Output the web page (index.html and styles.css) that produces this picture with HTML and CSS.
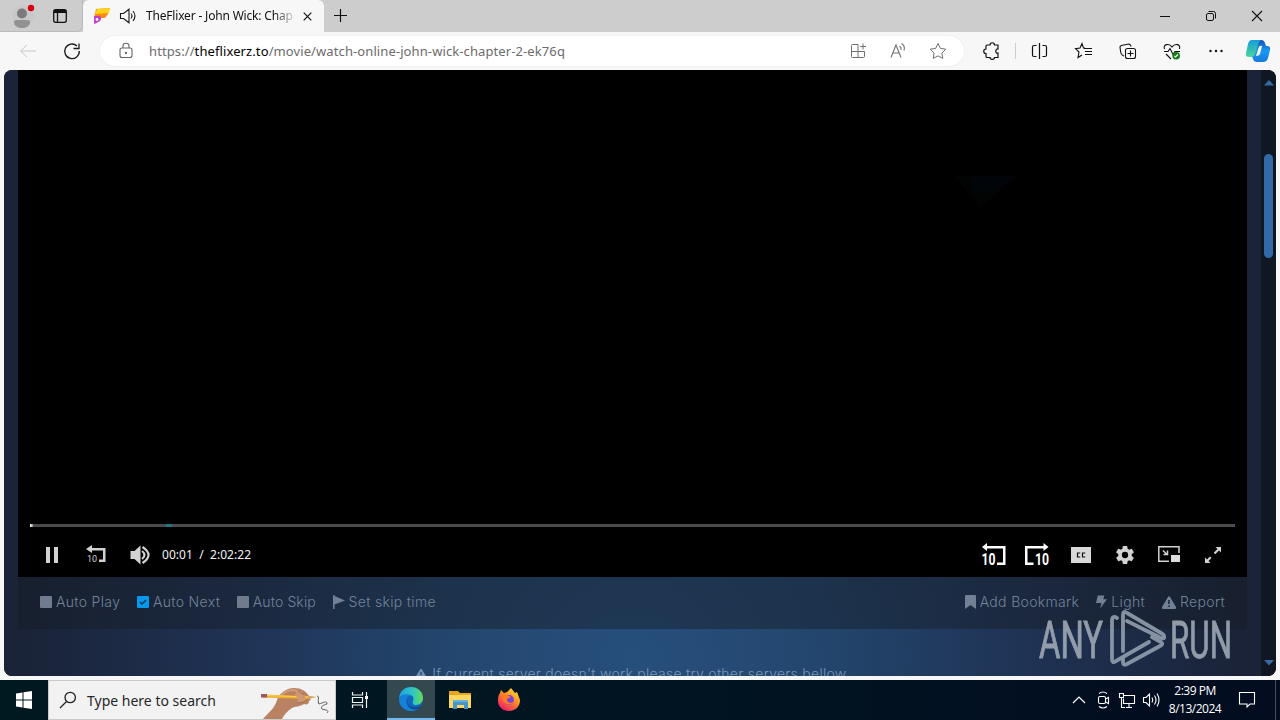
FILE: index.html
```html
<!DOCTYPE html>
<html lang="en">
<head>
<meta charset="utf-8">
<title>TheFlixer - John Wick: Chapter 2</title>
<link rel="stylesheet" href="styles.css">
</head>
<body>
<div class="screen">
  <header class="tabs">
    <div class="tab-tools">
      <svg class="profile" width="30" height="28" viewBox="0 0 30 28"><circle cx="15" cy="14" r="11" fill="#c8c8c8"/><circle cx="14" cy="11.500" r="5" fill="#7b7b7b"/><path d="M6 20q0-2 3-2h10q3 0 3 2c0 4-4 6-8 6s-8-2-8-6" fill="#929292"/><circle cx="23" cy="6" r="3.200" fill="#d8000f"/></svg>
      <svg class="workspaces" width="16" height="16" viewBox="0 0 16 16"><rect x="1.700" y="1.700" width="12.600" height="12.600" rx="2" fill="none" stroke="#111" stroke-width="1.300"/><path d="M2 2h12v3H2z" fill="#111"/><path d="M5.500 4v10" stroke="#111" stroke-width="1.300"/></svg>
    </div>
    <div class="tab">
      <svg class="favicon" width="18" height="16" viewBox="0 0 18 16"><path d="M3 1l14-1-2 6-3 4H1z" fill="#ff8a12"/><path d="M4 1l13-1-1 5-14 1z" fill="#ffd21a"/><path d="M1 8h6q2 2 0 5-3 2-6 3z" fill="#c23fc8"/><circle cx="4" cy="11.500" r="1.400" fill="#fff"/></svg>
      <svg class="speaker" width="18" height="16" viewBox="0 0 18 16" fill="none" stroke="#1b1b1b" stroke-width="1.100"><path d="M1.500 5.500h3L10 1.200v13.600l-5.500-4.300h-3zM12 5.500q2 2.500 0 5M14 3q4 5 0 10"/></svg>
      <span class="tab-title">TheFlixer - John Wick: Chap</span>
      <svg class="close" width="9" height="9" viewBox="0 0 9 9" stroke="#111" stroke-width="1.200"><path d="M.7.7l7.600 7.600M8.300.7L.7 8.300"/></svg>
    </div>
    <svg class="plus" width="14" height="14" viewBox="0 0 14 14" stroke="#111" stroke-width="1.200"><path d="M6.500 0v13M0 6.500h13"/></svg>
    <div class="window-buttons">
      <svg width="46" height="32" viewBox="0 0 46 32" stroke="#111"><path d="M18 16.500h10"/></svg>
      <svg width="46" height="32" viewBox="0 0 46 32" fill="none" stroke="#111"><rect x="18.500" y="13.500" width="7" height="7" rx="1.500"/><path d="M20.500 11.500h5q2 0 2 2v5"/></svg>
      <svg width="46" height="32" viewBox="0 0 46 32" stroke="#111" stroke-width="1.100"><path d="M18 11l10 10M28 11L18 21"/></svg>
    </div>
  </header>

  <div class="toolbar">
    <svg class="slot" viewBox="0 0 44 38" fill="none" stroke="#c9c9c9"><path d="M30 19H15M21 13l-6.500 6 6.500 6"/></svg>
    <svg class="slot" viewBox="0 0 44 38" fill="none" stroke="#1b1b1b" stroke-width="1.300"><path d="M27 14a7.300 7.300 0 1 0 2.300 5M29 11.500v5h-5.500"/></svg>
    <div class="address">
      <svg class="lock" width="14" height="18" viewBox="0 0 14 18" fill="none" stroke="#666" stroke-width="1.100"><rect x="1" y="6" width="12" height="9.500" rx="2"/><path d="M4 6V3.800Q4 1.200 7 1.200t3 2.600V6"/><circle cx="7" cy="11" r=".6" fill="#666"/></svg>
      <span class="url">https://<b>theflixerz.to</b>/movie/watch-online-john-wick-chapter-2-ek76q</span>
      <div class="address-icons">
        <svg width="40" height="30" viewBox="0 0 40 30" fill="none" stroke="#707070"><path d="M20 8.500h-5.500q-1 0-1 1v11q0 1 1 1h11q1 0 1-1v-5h-13M20 8.500v13M25 7.500v6M22 10.500h6"/></svg>
        <svg width="40" height="30" viewBox="0 0 40 30" fill="none" stroke="#707070" stroke-width="1.100"><path d="M13 21.500L18 9l5 12.500M15 17h6M21.500 10q2 1.500 1.500 4M23.500 7.500q4 2.500 2.500 7"/></svg>
        <svg width="40" height="30" viewBox="0 0 40 30" fill="none" stroke="#707070" stroke-linejoin="round"><path d="M20 7.500l2.400 4.900 5.400.8-3.900 3.800.9 5.400-4.800-2.500-4.800 2.500.9-5.400-3.900-3.800 5.400-.8z"/></svg>
      </div>
    </div>
    <svg class="ext" width="51" height="38" viewBox="0 0 51 38" fill="none" stroke="#111" stroke-width="1.200"><path d="M23 13h3c0-3 4.500-3 4.500 0H34v4c-3-.5-3 5 0 4v4.500h-3.500c0 2.500-4.500 2.500-4.500 0h-3q-1 0-1-1v-3c-3 0-3-4.500 0-4.500v-3q0-1 1-1z"/></svg>
    <i class="divider"></i>
    <svg class="slot" viewBox="0 0 44 38" fill="none" stroke="#111" stroke-width="1.200"><path d="M18.500 13.500H16q-1.500 0-1.500 1.500v8q0 1.500 1.500 1.500h2.500M21.500 11v16M24.500 13.500H27q1.500 0 1.500 1.500v8q0 1.500-1.500 1.500h-2.500"/></svg>
    <svg class="slot" viewBox="0 0 44 38" fill="none" stroke="#111" stroke-width="1.100"><path d="M23 16h-1.500L20 11.500 18 16l-4.500.7L17 20l-1 5.500 4-2.500M22 16.500h8M23 19.500h7M23 22.500h7"/></svg>
    <svg class="slot" viewBox="0 0 44 38" fill="none" stroke="#111" stroke-width="1.100"><rect x="19.500" y="16.500" width="10" height="10" rx="2"/><path d="M24.500 18.500v6M21.500 21.500h6M18 24q-3-1-3.500-5l-.5-4q0-1 1.500-1.500l7-1.500q2 0 2.500 2.500"/></svg>
    <svg class="slot" viewBox="0 0 44 38" fill="none" stroke="#111" stroke-width="1.100"><path d="M14.500 17c-2-5 5-6 7.500-2 3-4 9-3 7.500 2M14 19.500h4l2-3 3 6 2-3h5M16 22l5 5"/><circle cx="26.200" cy="23.700" r="3.800" fill="#137b18" stroke="none"/><path d="M24.500 24l1 1 2.500-2.500" stroke="#fff"/></svg>
    <svg class="slot" viewBox="0 0 44 38" fill="#111"><circle cx="16.500" cy="19" r="1.200"/><circle cx="22" cy="19" r="1.200"/><circle cx="27.500" cy="19" r="1.200"/></svg>
    <svg class="copilot" width="42" height="38" viewBox="1 0 42 38"><defs><linearGradient id="ca" x2="0" y2="1"><stop stop-color="#169bd8"/><stop offset="1" stop-color="#4ad79c"/></linearGradient><linearGradient id="cb" x2="0" y2="1"><stop stop-color="#154fb8"/><stop offset=".5" stop-color="#1799f5"/><stop offset="1" stop-color="#1979dc"/></linearGradient></defs><path d="M19 8h5q3 0 4 3l1 3h1q4 0 3 4l-2 8q-1 4-5 4h-6q-3 0-4-3l-1-3z" fill="url(#cb)"/><path d="M15 8h9q-2 1-3 5l-3 9q-1 3-3 3h-3q-4 0-3-4l2-9q1-4 4-4z" fill="url(#ca)"/><path d="M22 14.500q2-1 3-.500l-2 8q-1 2-4 2z" fill="#fff"/></svg>
  </div>

  <main class="page">
    <section class="content">
      <div class="player">
        <svg class="scene" width="150" height="60" viewBox="0 0 150 60"><path d="M32 14h62L57 46z" fill="#020303"/><path d="M47 14h45L75 29H49z" fill="#01050a"/></svg>
        <div class="progress"><i class="played"></i><i class="mark"></i></div>
        <div class="controls">
          <svg class="ctl" viewBox="0 0 44 44" fill="#d2d2d2"><path d="M16 14h4v16h-4zM24 14h4v16h-4z"/></svg>
          <svg class="ctl" viewBox="0 0 44 44" fill="#d2d2d2"><path d="M12 16l6-4v3h13.500v14H25v-2.500h4V17.500H18V20z"/><text x="13" y="28.500" class="n-small">10</text></svg>
          <svg class="ctl" viewBox="0 0 44 44" fill="#d2d2d2"><path d="M12.500 18h4l6-5.500v19l-6-5.500h-4z"/><path d="M24 18q5 4 0 8M24.500 14q12 8 0 16" fill="none" stroke="#d2d2d2" stroke-width="2.200"/></svg>
          <span class="time">00:01&nbsp; /&nbsp; 2:02:22</span>
          <div class="right">
            <svg class="ctl" viewBox="0 0 44 44" fill="#fff"><path d="M11 14l5-4v3h18.500v19H26v-2.500h6v-14H16V18z"/><text x="10.500" y="32" class="n-big" textLength="14" lengthAdjust="spacingAndGlyphs">10</text></svg>
            <svg class="ctl" viewBox="0 0 44 44" fill="#fff"><path d="M33.500 14l-5-4v3H10v19h8.500v-2.500h-6v-14h16V18z"/><text x="20" y="32" class="n-big" textLength="14" lengthAdjust="spacingAndGlyphs">10</text></svg>
            <svg class="ctl" viewBox="0 0 44 44" fill="#d8d8d8"><path d="M12 14h20v16H12z"/><path d="M21.200 20H18.500v4h2.700M26.200 20h-2.700v4h2.700" fill="none" stroke="#111" stroke-width="1.200"/></svg>
            <svg class="ctl" viewBox="0 0 24 24" fill="#d2d2d2"><path transform="translate(6.100 6.100) scale(.492)" d="M19.430 12.980a7.800 7.800 0 0 0 0-1.960l2.110-1.650a.5.5 0 0 0 .12-.64l-2-3.460a.5.5 0 0 0-.61-.22l-2.490 1a7.300 7.300 0 0 0-1.690-.98l-.38-2.650A.5.5 0 0 0 14 2h-4a.5.5 0 0 0-.49.420l-.38 2.650c-.61.250-1.170.590-1.690.980l-2.490-1a.5.5 0 0 0-.61.220l-2 3.460a.5.5 0 0 0 .12.640l2.110 1.650a7.800 7.800 0 0 0 0 1.960l-2.110 1.650a.5.5 0 0 0-.12.640l2 3.460c.12.220.390.300.61.220l2.490-1c.52.400 1.080.730 1.690.980l.38 2.650c.03.240.24.420.49.420h4c.25 0 .46-.18.490-.42l.38-2.650c.61-.25 1.170-.59 1.690-.98l2.490 1c.23.090.49 0 .61-.22l2-3.460a.5.5 0 0 0-.12-.64zM12 15.500a3.500 3.500 0 1 1 0-7 3.500 3.500 0 0 1 0 7z"/></svg>
            <svg class="ctl" viewBox="0 0 44 44" fill="none" stroke="#d2d2d2" stroke-width="1.500"><path d="M32 20v-6.200H11.800v14.400H22M16 17.500l4 4M20.500 17.500v4h-4"/><path d="M24 22h9v7h-9z" fill="#ddd" stroke="none"/></svg>
            <svg class="ctl" viewBox="0 0 44 44" fill="#d2d2d2"><path d="M24.500 14H30v5.500l-2-2-3.800 3.800-1.500-1.500 3.800-3.800zM19.500 30H14v-5.500l2 2 3-3 1.500 1.500-3 3z"/></svg>
          </div>
        </div>
      </div>
      <div class="options">
        <span class="opt"><i class="box"></i><b>Auto Play</b></span>
        <span class="opt next"><i class="box on"><svg width="12" height="12" viewBox="0 0 12 12" fill="none" stroke="#123a58" stroke-width="1.500"><path d="M3 6l2 2 4-4"/></svg></i><b>Auto Next</b></span>
        <span class="opt next"><i class="box"></i><b class="skip">Auto Skip</b></span>
        <span class="opt next"><svg width="12" height="14" viewBox="0 0 12 14" fill="#728096"><path d="M0 0h1.500v1L12 5.500 1.500 9.500V14H0z"/></svg><b>Set skip time</b></span>
        <div class="options-right">
          <span class="opt"><svg width="11" height="14" viewBox="0 0 11 14" fill="#728096"><path d="M1 0h9q1 0 1 1v13l-5.500-4L0 14V1q0-1 1-1z"/></svg><b>Add Bookmark</b></span>
          <span class="opt"><svg width="11" height="14" viewBox="0 0 12 14" fill="#728096"><path d="M2 0h7L8 4h4L4.500 14 6 8H0z"/></svg><b>Light</b></span>
          <span class="opt"><svg width="14" height="13" viewBox="0 0 14 13"><path d="M6 1q1-1.500 2 0l6 10q.5 1.500-1 2H1q-1.500-.5-1-2z" fill="#728096"/><path d="M7 4v4M7 9.500v1.500" stroke="#1a2a41" stroke-width="1.600"/></svg><b>Report</b></span>
        </div>
      </div>
      <div class="notice"><svg width="12" height="12" viewBox="0 0 14 13"><path d="M6 1q1-1.500 2 0l6 10q.5 1.500-1 2H1q-1.500-.5-1-2z" fill="#7390b2"/><path d="M7 4v4M7 9.500v1.500" stroke="#24466c" stroke-width="1.600"/></svg><span>If current server doesn't work please try other servers bellow.</span></div>
    </section>
    <aside class="scroll">
      <svg width="10" height="6" viewBox="0 0 10 6" fill="#376b9f"><path d="M5 0l5 5.500H0z"/></svg>
      <i class="thumb"></i>
      <svg class="down" width="10" height="6" viewBox="0 0 10 6" fill="#376b9f"><path d="M0 0h10L5 5.500z"/></svg>
    </aside>
  </main>

  <svg class="watermark" width="210" height="64" viewBox="0 0 210 64">
    <g fill="#a7b0bc" stroke="#a7b0bc" stroke-width=".9"><text x="4" y="53" textLength="64" lengthAdjust="spacingAndGlyphs">ANY</text><text x="135" y="53" textLength="62" lengthAdjust="spacingAndGlyphs">RUN</text></g>
    <g fill="none" stroke="#98a5b4" stroke-width="3.800" stroke-linecap="round" stroke-linejoin="round"><path d="M82 13q-5-3-5 3v38q0 5 4 2l33-19"/><path d="M88 46V10q0-5 4-2l34 20q4 2 3 5-2 1-5-1L92 16"/><path d="M88 54v3q0 4 4 2l33-18q4-2 1-4l-9-5"/></g>
  </svg>

  <footer class="taskbar">
    <svg class="start" width="48" height="40" viewBox="0 0 48 40" fill="#fff"><path d="M16 13.500l6.500-1v7H16zM23.500 12.300L32 11v8.500h-8.500zM16 20.500h6.500v7l-6.500-1zM23.500 20.500H32V29l-8.500-1.300z"/></svg>
    <div class="search">
      <svg width="18" height="18" viewBox="0 0 18 18" fill="none" stroke="#222" stroke-width="1.300"><circle cx="11.200" cy="6.500" r="5.200"/><path d="M7.500 10.500L1 17"/></svg>
      <span>Type here to search</span>
      <svg class="hand" width="74" height="36" viewBox="0 0 74 36"><path d="M2 36C8 29 14 25 16 17c2-6 9-12 17-12 7 0 12 3 15 8 1 2 3 4 0 5 0 3-2 4-5 3-4 3-9 2-12 4-5 3-8 7-10 11z" fill="#b98363"/><path d="M18 15c4-6 9-8 15-8l8 3" fill="none" stroke="#d09b79" stroke-width="2"/><path d="M1 11.500l46 1.500 8 1-8 2-46-1.500z" fill="#eeae25"/><path d="M4 12.500l43 1.500" stroke="#ffcf57"/><path d="M0 11h6v3.500H0z" fill="#9d5963"/><path d="M47 13l8 1-8 2z" fill="#d3a26f"/><path d="M36 8l6 3q4 3 3 7l-9 2q3-4-2-8z" fill="#cf9873"/><path d="M36 20q8 0 10-4M37 8l6 4" fill="none" stroke="#93614a" stroke-width=".7"/><path d="M56 13c3 0 0 6 2 8 4-1 8-4 8 0-4 1-7 3-5 5 3 1 8 1 5 4" fill="none" stroke="#546057"/></svg>
    </div>
    <svg class="task" width="51" height="40" viewBox="0 0 51 40" fill="none" stroke="#f2f2f2" stroke-width="1.200"><path d="M16.500 12v3h10v-3M16.500 28v-3h10v3M16.500 17.500h10v5h-10zM30.500 12v16"/><path d="M29 16h3v3h-3z" fill="#fff" stroke="none"/></svg>
    <div class="app active"><svg width="26" height="26" viewBox="0 0 26 26"><defs><linearGradient id="ea"><stop stop-color="#1aa4e5"/><stop offset=".6" stop-color="#31c7bd"/><stop offset="1" stop-color="#66dc55"/></linearGradient></defs><circle cx="13" cy="13" r="12" fill="#1166bd"/><path d="M1 12C2 4 8 1 13 1c8 0 12 6 12 11 0 4-3 7-7 7-3 0-4-2-3-4 2-4-2-7-6-6-4 0-7 2-8 3z" fill="url(#ea)"/><path d="M1 12c2-4 8-5 12-2-5 0-6 5-4 9 2 5 8 6 12 3-5 5-14 3-17-1-2-2-3-5-3-9z" fill="#1681d8"/><path d="M9 14c0 6 6 9 13 6l1 1c-6 5-15 1-14-7z" fill="#134c92"/></svg></div>
    <div class="app"><svg width="24" height="20" viewBox="0 0 24 20"><path d="M1 1h9l2 2h11v15H1z" fill="#e8a51e"/><path d="M1 5h22v13H1z" fill="#ffd660"/><path d="M5 10h15v9h-4v-4H9v4H5z" fill="#4594ca"/><path d="M5 10h15v2H5z" fill="#65b2dc"/></svg></div>
    <div class="app"><svg width="24" height="26" viewBox="0 0 24 26"><defs><linearGradient id="ff" x1="1" y1="0" x2=".3" y2="1"><stop stop-color="#fff044"/><stop offset=".45" stop-color="#ff9822"/><stop offset="1" stop-color="#f11d64"/></linearGradient></defs><path d="M3 6l1-3 3 3 3-1 4-4 4 5 2-1 3 8c0 7-5 11-11 11S1 20 1 14c0-3 0-5 2-8z" fill="url(#ff)"/><circle cx="12" cy="13" r="5" fill="#7543db"/><path d="M5 9c4-3 7 0 9 1l-4 2c0 4 4 5 7 2-1 5-11 6-12-5z" fill="#ff7c25"/></svg></div>
    <div class="tray">
      <svg width="24" height="24" viewBox="0 0 24 24" fill="none" stroke="#fff" stroke-width="1.200"><path d="M6 15l6-6 6 6"/></svg>
      <svg width="24" height="24" viewBox="0 0 24 24" fill="none" stroke="#fff" stroke-width="1.100"><rect x="7.500" y="8.500" width="7" height="7" rx="1.500"/><path d="M14.500 11l3-1.500v6l-3-1.500M8 5.500q4-3 8 0M8 18.500q4 3 8 0"/></svg>
      <svg width="24" height="24" viewBox="0 0 24 24" fill="none" stroke="#fff" stroke-width="1.100"><path d="M9 7.500h10.500v8H8.500v-5M11 19.500h6M14 15.500v4M4.500 5.500h4v4h-4zM6.500 9.500v10H10"/></svg>
      <svg width="24" height="24" viewBox="0 0 24 24" fill="none" stroke="#fff" stroke-width="1.100"><path d="M4.500 9.500H7L10.500 6v12L7 14.500H4.500zM13 9.500q1.500 2.500 0 5M15.500 7.500q3 4.500 0 9M18 5.500q4 6.500 0 13"/></svg>
      <div class="clock"><span>2:39 PM</span><span class="date">8/13/2024</span></div>
      <svg class="action" width="18" height="18" viewBox="0 0 18 18" fill="none" stroke="#fff" stroke-width="1.100"><path d="M1.500 1.500h15v11.500H12l-3 3v-3H1.500z"/></svg>
      <i class="peek"></i>
    </div>
  </footer>
</div>
</body>
</html>
```
FILE: styles.css
```css
* { box-sizing: border-box; }
body { margin: 0; background: #f7f7f7; font-family: "Noto Sans", "Open Sans", sans-serif; }
svg { display: block; flex: none; }
.screen { width: 1280px; height: 720px; display: flex; flex-direction: column; overflow: hidden; position: relative; }

.tabs { height: 32px; flex: none; background: #cdcdcd; display: flex; align-items: center; }
.tab-tools { width: 83px; height: 32px; display: flex; align-items: center; padding-left: 8px; border-right: 1px solid #b9b9b9; border-bottom: 1px solid #bbb; border-radius: 0 0 6px 0; }
.workspaces { margin-left: 14px; }
.tab { width: 241px; height: 32px; background: #f7f7f7; border-radius: 6px 6px 0 0; display: flex; align-items: center; padding-left: 10px; }
.speaker { margin-left: 8px; }
.tab-title { width: 149px; margin-left: 9px; white-space: nowrap; font-size: 12px; line-height: 20px; color: #111; letter-spacing: -0.18px; mask-image: linear-gradient(90deg, #000 86%, transparent 101%); }
.close { margin-left: 8px; }
.plus { margin-left: 10px; }
.window-buttons { display: flex; margin-left: auto; }

.toolbar { height: 38px; flex: none; display: flex; align-items: center; background: #f7f7f7; padding-left: 6px; }
.slot { width: 44px; height: 38px; }
.address { width: 864px; height: 30px; margin-left: 6px; background: #fff; border-radius: 15px; display: flex; align-items: center; padding-left: 19px; box-shadow: 0 0 2px #e4e4e4; }
.url { margin-left: 16px; font-size: 13px; line-height: 20px; letter-spacing: 0.1px; color: #6c6c6c; white-space: nowrap; }
.url b { font-weight: 400; color: #000; }
.address-icons { display: flex; margin-left: auto; margin-right: 6px; }
.divider { width: 1px; height: 16px; background: #ccc; margin-right: 2px; }

.page { height: 606px; flex: none; margin: 0 4px; border-radius: 8px; overflow: hidden; display: flex; background: #192238; }
.content { width: 1257px; padding: 0 14px; overflow: hidden; background: radial-gradient(ellipse 610px 500px at 628px 585px, #274f7c 0%, #23466e 30%, #1f3253 66%, #1a2338 100%); }
.player { height: 507px; width: 1229px; background: #000; display: flex; flex-direction: column; padding: 0 12px; }
.scene { margin: 92px 0 0 893px; }
.progress { width: 1205px; height: 3px; margin-top: 302px; background: #4c4c4c; display: flex; }
.played { width: 3px; background: linear-gradient(90deg, #fff, #888); }
.mark { width: 6px; margin-left: 133px; background: #267381; }
.controls { display: flex; align-items: center; margin-top: 6px; height: 44px; }
.ctl { width: 44px; height: 44px; }
.n-small { font: 9px "Roboto", sans-serif; }
.n-big { font: bold 17px "Roboto", sans-serif; }
.time { color: #f3f3f3; font-size: 12px; line-height: 18px; letter-spacing: 0.04px; white-space: nowrap; }
.right { display: flex; margin-left: auto; }
.options { height: 52px; width: 1229px; display: flex; align-items: center; padding: 0 22px 2px; background: rgba(22, 29, 38, .45); }
.opt { display: flex; align-items: center; gap: 4px; color: #73839a; font: 300 14px/20px "Inter", sans-serif; letter-spacing: 0.33px; white-space: nowrap; }
.opt b { font-weight: 300; }
.opt .skip { letter-spacing: 0.12px; }
.box { display: block; width: 12px; height: 12px; background: #707b8e; border-radius: 1px; }
.box.on { background: #0799ed; }
.next { margin-left: 16.7px; }
.options-right { display: flex; gap: 17px; margin-left: auto; }
.notice { display: flex; align-items: center; justify-content: center; gap: 5px; margin-top: 35px; color: #7895b7; font: 300 14px/20px "Inter", sans-serif; letter-spacing: 0.27px; white-space: nowrap; }
.scroll { width: 15px; background: #101722; display: flex; flex-direction: column; align-items: center; padding: 10px 0; }
.thumb { width: 9px; height: 104px; margin-top: 68px; border-radius: 5px; background: #316aa6; }
.down { margin-top: auto; }

.watermark { position: absolute; left: 1035px; top: 605px; opacity: .85; }
.watermark text { font: 51px "Roboto", sans-serif; }

.taskbar { height: 40px; flex: none; margin-top: 4px; display: flex; background: linear-gradient(90deg, #001820 0%, #001521 48%, #030c20 100%); }
.search { width: 288px; display: flex; align-items: center; background: #f2f2f2; border: 1px solid #c9c9c9; padding-left: 10px; font-size: 14px; color: #272727; }
.search span { margin-left: 10px; white-space: nowrap; }
.hand { margin-left: auto; align-self: flex-end; }
.app { width: 49px; height: 40px; display: flex; align-items: center; justify-content: center; }
.app.active { width: 48px; background: #344850; border-bottom: 2px solid #76b9ed; }
.tray { margin-left: auto; display: flex; align-items: center; color: #fff; }
.clock { width: 60px; margin-left: 2px; display: flex; flex-direction: column; align-items: center; font: 12px/18px "Open Sans", sans-serif; letter-spacing: -0.5px; }
.action { margin-left: 13px; }
.peek { width: 1px; height: 40px; margin-left: 19px; margin-right: 4px; background: #46505d; }
```
